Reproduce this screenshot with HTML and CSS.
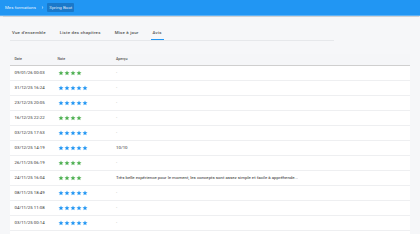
FILE: index.html
```html
<!DOCTYPE html>
<html lang="fr">
<head>
<meta charset="utf-8">
<link rel="stylesheet" href="styles.css">
</head>
<body>
<svg class="defs" width="0" height="0" aria-hidden="true">
  <symbol id="star" viewBox="0 0 24 24"><path d="M12 17.27L18.18 21l-1.64-7.03L22 9.24l-7.19-.61L12 2 9.19 8.63 2 9.24l5.46 4.73L5.82 21z"/></symbol>
</svg>
<header class="topbar">
  <span class="crumb">Mes formations</span>
  <svg class="chev" viewBox="0 0 24 24"><path d="M8.6 16.6L13.2 12 8.6 7.4 10 6l6 6-6 6z"/></svg>
  <span class="chip">Spring Boot</span>
</header>
<main class="content">
  <nav class="tabs">
    <span class="tab">Vue d'ensemble</span>
    <span class="tab">Liste des chapitres</span>
    <span class="tab">Mise à jour</span>
    <span class="tab active">Avis</span>
  </nav>
  <section class="card">
    <div class="row head">
      <span class="c-date">Date</span><span class="c-note">Note</span><span class="c-prev">Aperçu</span>
    </div>
    <div class="row"><span class="c-date">09/01/26 00:03</span><span class="c-note stars g4"><svg><use href="#star"/></svg><svg><use href="#star"/></svg><svg><use href="#star"/></svg><svg><use href="#star"/></svg></span><span class="c-prev dash">-</span></div>
    <div class="row"><span class="c-date">31/12/25 16:24</span><span class="c-note stars b5"><svg><use href="#star"/></svg><svg><use href="#star"/></svg><svg><use href="#star"/></svg><svg><use href="#star"/></svg><svg><use href="#star"/></svg></span><span class="c-prev dash">-</span></div>
    <div class="row"><span class="c-date">23/12/25 20:05</span><span class="c-note stars b5"><svg><use href="#star"/></svg><svg><use href="#star"/></svg><svg><use href="#star"/></svg><svg><use href="#star"/></svg><svg><use href="#star"/></svg></span><span class="c-prev dash">-</span></div>
    <div class="row"><span class="c-date">16/12/25 22:22</span><span class="c-note stars g4"><svg><use href="#star"/></svg><svg><use href="#star"/></svg><svg><use href="#star"/></svg><svg><use href="#star"/></svg></span><span class="c-prev dash">-</span></div>
    <div class="row"><span class="c-date">03/12/25 17:53</span><span class="c-note stars b5"><svg><use href="#star"/></svg><svg><use href="#star"/></svg><svg><use href="#star"/></svg><svg><use href="#star"/></svg><svg><use href="#star"/></svg></span><span class="c-prev dash">-</span></div>
    <div class="row"><span class="c-date">03/12/25 14:19</span><span class="c-note stars b5"><svg><use href="#star"/></svg><svg><use href="#star"/></svg><svg><use href="#star"/></svg><svg><use href="#star"/></svg><svg><use href="#star"/></svg></span><span class="c-prev">10/10</span></div>
    <div class="row"><span class="c-date">26/11/25 06:19</span><span class="c-note stars g4"><svg><use href="#star"/></svg><svg><use href="#star"/></svg><svg><use href="#star"/></svg><svg><use href="#star"/></svg></span><span class="c-prev dash">-</span></div>
    <div class="row"><span class="c-date">24/11/25 16:04</span><span class="c-note stars g4"><svg><use href="#star"/></svg><svg><use href="#star"/></svg><svg><use href="#star"/></svg><svg><use href="#star"/></svg></span><span class="c-prev">Très belle expérience pour le moment, les concepts sont assez simple et facile à appréhende...</span></div>
    <div class="row"><span class="c-date">08/11/25 18:49</span><span class="c-note stars b5"><svg><use href="#star"/></svg><svg><use href="#star"/></svg><svg><use href="#star"/></svg><svg><use href="#star"/></svg><svg><use href="#star"/></svg></span><span class="c-prev dash">-</span></div>
    <div class="row"><span class="c-date">04/11/25 11:08</span><span class="c-note stars b5"><svg><use href="#star"/></svg><svg><use href="#star"/></svg><svg><use href="#star"/></svg><svg><use href="#star"/></svg><svg><use href="#star"/></svg></span><span class="c-prev dash">-</span></div>
    <div class="row"><span class="c-date">03/11/25 00:14</span><span class="c-note stars b5"><svg><use href="#star"/></svg><svg><use href="#star"/></svg><svg><use href="#star"/></svg><svg><use href="#star"/></svg><svg><use href="#star"/></svg></span><span class="c-prev dash">-</span></div>
    <div class="row tail"></div>
  </section>
</main>
</body>
</html>
```
FILE: styles.css
```css
* { box-sizing: border-box; }
html, body { margin: 0; padding: 0; }
body {
  background: #f6f7f9;
  font-family: Roboto, "Liberation Sans", sans-serif;
  color: #333;
  width: 420px;
  height: 234px;
  overflow: hidden;
}
.defs { position: absolute; }
.topbar {
  height: 16px;
  background: #2196f3;
  display: flex;
  align-items: center;
  padding-left: 5px;
  box-shadow: 0 0.5px 1px rgba(0,0,0,0.15);
  border-bottom: 0.7px solid #5fb2f5;
}
.crumb {
  color: rgba(255,255,255,0.9);
  font-size: 4.4px;
}
.chev {
  width: 5px;
  height: 5px;
  fill: rgba(255,255,255,0.9);
  margin: 0 1.5px 0 4.5px;
}
.chip {
  display: flex;
  align-items: center;
  height: 9px;
  padding: 0 2.3px;
  border-radius: 1px;
  background: #1a78c9;
  color: rgba(255,255,255,0.85);
  font-size: 4.4px;
}
.content {
  padding: 0 10px;
}
.tabs {
  margin-top: 11px;
  width: 324px;
  display: flex;
  gap: 10px;
  border-bottom: 0.7px solid #e6e8eb;
}
.tab {
  font-size: 4.4px;
  font-weight: 500;
  letter-spacing: 0.2px;
  color: #555;
  padding: 4px 2px;
  height: 12.5px;
  line-height: 4.5px;
  border-bottom: 0.8px solid transparent;
}
.tab.active {
  border-bottom-color: #2196f3;
}
.card {
  margin-top: 13px;
  width: 400px;
  background: #fff;
  border-radius: 1px;
  box-shadow: 0 0 0.5px rgba(0,0,0,0.12);
}
.row {
  display: flex;
  align-items: center;
  height: 15px;
  border-bottom: 0.7px solid #eeeff1;
  font-size: 4.35px;
}
.row.head {
  height: 12px;
  background: #f5f6f8;
  border-bottom: 0.8px solid #cfcfcf;
  font-size: 3.6px;
  font-weight: 500;
  color: #555;
}
.row.tail { border-bottom: none; }
.c-date { width: 44px; padding-left: 4.5px; }
.c-note { width: 58px; padding-left: 3.5px; }
.c-prev { flex: 1; padding-left: 4px; }
.dash { color: #999; }
.stars { display: flex; gap: 0; }
.stars svg { width: 6px; height: 6px; }
.g4 svg { fill: #4caf50; }
.b5 svg { fill: #2196f3; }
```
